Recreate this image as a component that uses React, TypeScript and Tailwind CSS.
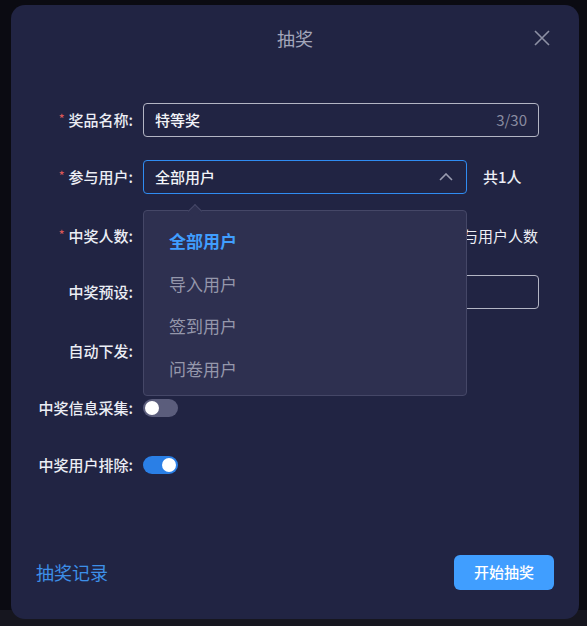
import React from "react";

const font = { fontFamily: '"Noto Sans CJK SC", "Noto Sans", sans-serif' };

function Label({ req, children }: { req?: boolean; children: React.ReactNode }) {
  return (
    <div className="w-[107px] shrink-0 flex items-center justify-end pr-[10px] text-[15px] font-medium text-[#eceef5]">
      {req && <span className="text-[#d95757] text-[12px] mr-[4px] relative top-[-2px]">*</span>}
      <span>{children}</span>
    </div>
  );
}

function Switch({ on }: { on?: boolean }) {
  return (
    <div
      className={
        "w-[35px] h-[18px] rounded-full flex items-center px-[2px] " +
        (on ? "bg-[#2a7fe6] justify-end" : "bg-[#5b5d7c] justify-start")
      }
    >
      <div className="w-[14px] h-[14px] rounded-full bg-white" />
    </div>
  );
}

export default function App() {
  return (
    <div
      className="w-[587px] h-[626px] pt-[5px] pl-[11px] bg-[linear-gradient(to_bottom,#0b0b12_610px,#16161f_610px)]"
      style={font}
    >
      <div className="w-[568px] h-[614px] rounded-[14px] bg-[#212443] flex flex-col">
        {/* header */}
        <div className="relative h-[66px] flex items-center justify-center">
          <span className="text-[18px] text-[#a3a6ba] leading-none">抽奖</span>
          <svg
            className="absolute left-[522px] top-[24px]"
            width="18"
            height="18"
            viewBox="0 0 18 18"
            fill="none"
            stroke="#8d90a4"
            strokeWidth="1.6"
          >
            <path d="M2 2 L16 16 M16 2 L2 16" />
          </svg>
        </div>

        {/* form */}
        <div className="mt-[32px] flex flex-col pl-[25px]">
          <div className="flex items-center h-[34px]">
            <Label req>奖品名称:</Label>
            <div className="w-[396px] h-[34px] rounded-[4px] border border-[#b3b5c4] flex items-center justify-between pl-[11px] pr-[11px]">
              <span className="text-[15px] font-medium text-[#f3f4f8]">特等奖</span>
              <span className="text-[15px] text-[#8a8ca0]">3/30</span>
            </div>
          </div>

          <div className="flex items-center h-[34px] mt-[23px]">
            <Label req>参与用户:</Label>
            <div className="relative">
              <div className="w-[324px] h-[34px] rounded-[4px] border border-[#2f8cf2] flex items-center justify-between pl-[11px] pr-[13px]">
                <span className="text-[15px] font-medium text-[#f3f4f8]">全部用户</span>
                <svg width="14" height="8" viewBox="0 0 14 8" fill="none" stroke="#9a9cb0" strokeWidth="1.6">
                  <path d="M1 7 L7 1 L13 7" />
                </svg>
              </div>
              {/* dropdown */}
              <div className="absolute left-0 top-[50px] z-10 w-[324px] h-[186px] rounded-[4px] bg-[#2e3050] border border-[#454767] flex flex-col pt-[8px] pl-[25px]">
                <div className="absolute left-[46px] top-[-5px] w-[10px] h-[10px] rotate-45 bg-[#2e3050] border-l border-t border-[#454767]" />
                <div className="h-[43px] flex items-center text-[17px] font-bold text-[#409eff]">全部用户</div>
                <div className="h-[43px] flex items-center text-[17px] text-[#9597ab]">导入用户</div>
                <div className="h-[42px] flex items-center text-[17px] text-[#9597ab]">签到用户</div>
                <div className="h-[43px] flex items-center text-[17px] text-[#9597ab]">问卷用户</div>
              </div>
            </div>
            <span className="ml-[16px] text-[15px] font-medium text-[#eceef5]">共1人</span>
          </div>

          <div className="flex items-center h-[34px] mt-[25px]">
            <Label req>中奖人数:</Label>
            <div className="w-[395px] flex items-center justify-end text-[15px] text-[#eceef5]">
              <span>人，最多不超过参与用户人数</span>
            </div>
          </div>

          <div className="flex items-center h-[34px] mt-[22px]">
            <Label>中奖预设:</Label>
            <div className="w-[396px] h-[34px] rounded-[4px] border border-[#b3b5c4]" />
          </div>

          <div className="flex items-center h-[34px] mt-[25px]">
            <Label>自动下发:</Label>
            <Switch />
          </div>

          <div className="flex items-center h-[34px] mt-[23px]">
            <Label>中奖信息采集:</Label>
            <Switch />
          </div>

          <div className="flex items-center h-[34px] mt-[23px]">
            <Label>中奖用户排除:</Label>
            <Switch on />
          </div>
        </div>

        {/* footer */}
        <div className="mt-auto mb-[29px] flex items-center justify-between pl-[25px] pr-[25px]">
          <span className="text-[18px] text-[#3d8fe8]">抽奖记录</span>
          <button className="w-[100px] h-[35px] rounded-[6px] bg-[#409eff] text-white text-[15px] font-medium">
            开始抽奖
          </button>
        </div>
      </div>
    </div>
  );
}
